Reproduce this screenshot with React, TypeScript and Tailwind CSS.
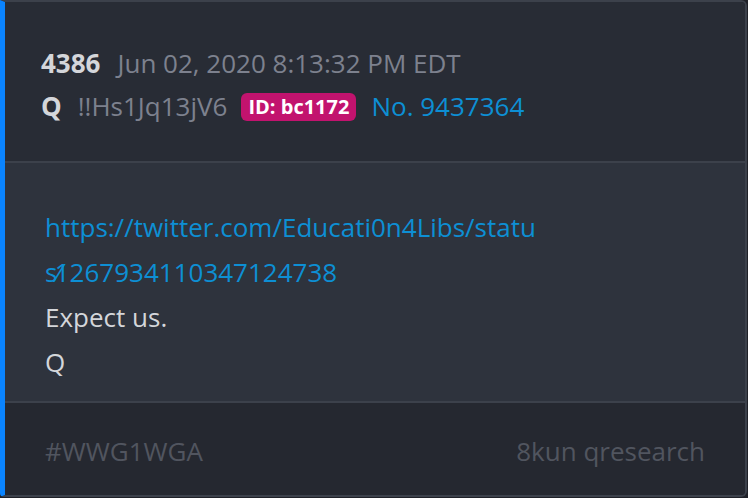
import React from "react";

export default function App() {
  return (
    <div className="w-[748px] h-[498px] bg-[#1f2128]" style={{ fontFamily: '"Open Sans", sans-serif' }}>
      <div className="w-[747px] h-[497px] flex flex-col border-2 border-[#3c414b] border-l-[5px] border-l-[#0a84ff] rounded-r-[6px] rounded-bl-[4px] overflow-hidden">
        <div className="h-[159px] shrink-0 bg-[#282c35] flex flex-col pl-[36px] pt-[40px] text-[26px] leading-[43px]">
          <div className="flex items-center">
            <span className="font-bold text-[#d4d6da]">4386</span>
            <span className="text-[#7d818e] ml-[17px]">Jun 02, 2020 8:13:32 PM EDT</span>
          </div>
          <div className="flex items-center">
            <span className="font-bold text-[#d4d6da]">Q</span>
            <span className="text-[#7d818e] ml-[16px]">!!Hs1Jq13jV6</span>
            <span className="ml-[14px] bg-[#c2136e] text-white font-bold text-[20px] leading-[28px] px-[7px] rounded-[6px]">ID: bc1172</span>
            <span className="ml-[15px] text-[#0d8fd4]">No. 9437364</span>
          </div>
        </div>
        <div className="h-[2px] shrink-0 bg-[#3c414b]" />
        <div className="h-[238px] shrink-0 bg-[#2e333d] pl-[40px] pt-[42px] text-[26px] leading-[45px]">
          <div className="text-[#0d8fd4]">
            https://twitter.com/Educati0n4Libs/statu
            <br />
            s<span className="-mr-[6px]">⁄</span>1267934110347124738
          </div>
          <div className="text-[#d4d6da]">Expect us.</div>
          <div className="text-[#d4d6da]">Q</div>
        </div>
        <div className="h-[2px] shrink-0 bg-[#3c414b]" />
        <div className="flex-1 bg-[#252830] flex items-center justify-between pl-[40px] pr-[40px] pt-[4px] text-[26px] text-[#51555f]">
          <span>#WWG1WGA</span>
          <span>8kun qresearch</span>
        </div>
      </div>
    </div>
  );
}
